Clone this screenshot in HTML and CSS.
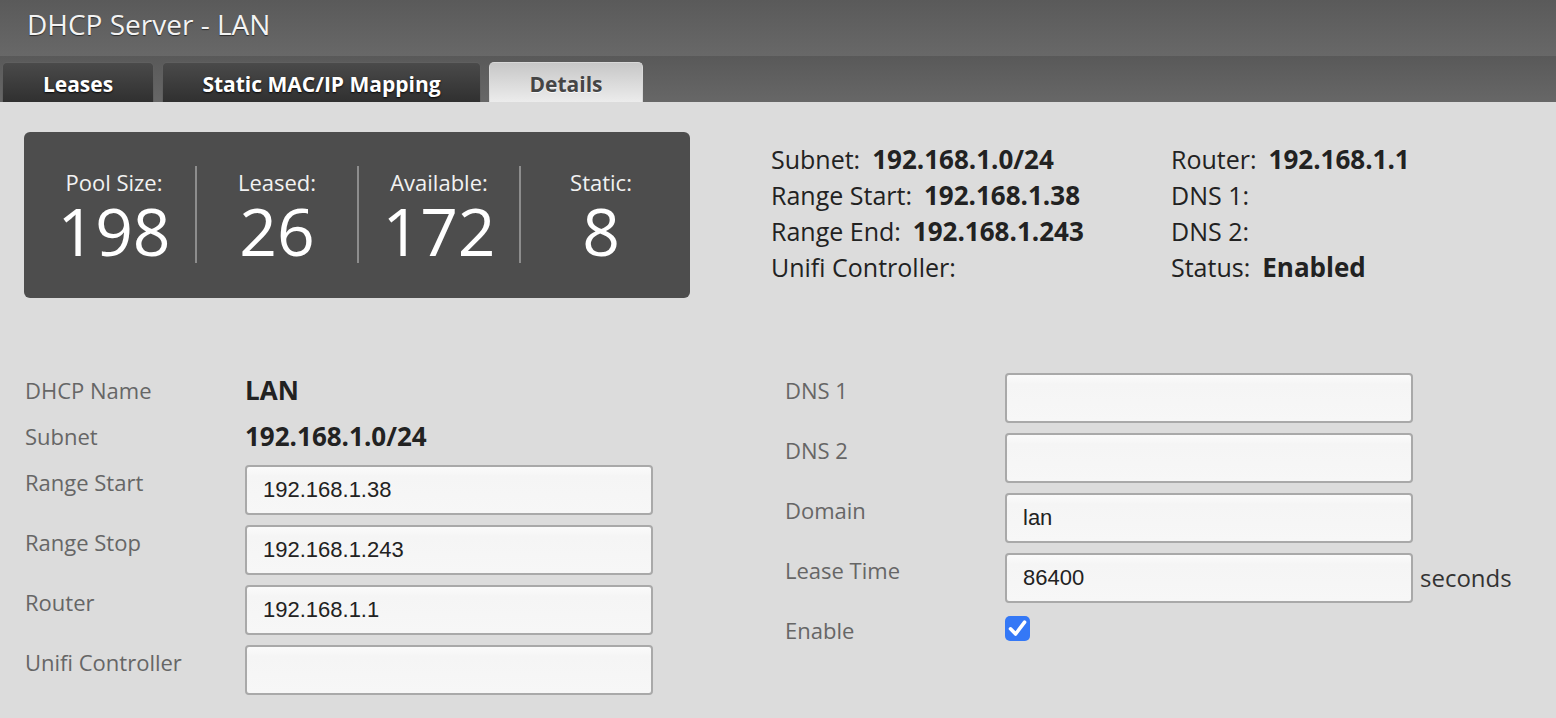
FILE: index.html
```html
<!DOCTYPE html>
<html lang="en">
<head>
<meta charset="utf-8">
<title>DHCP Server - LAN</title>
<link rel="stylesheet" href="styles.css">
</head>
<body>
<header class="titlebar">
  <h1 class="title">DHCP Server - LAN</h1>
</header>
<nav class="tabs">
  <a class="tab tab-leases">Leases</a>
  <a class="tab tab-static">Static MAC/IP Mapping</a>
  <a class="tab tab-details active">Details</a>
</nav>
<main class="content">
  <section class="summary">
    <div class="stats">
      <div class="stat">
        <div class="stat-label">Pool Size:</div>
        <div class="stat-num">198</div>
      </div>
      <div class="stat">
        <div class="stat-label">Leased:</div>
        <div class="stat-num">26</div>
      </div>
      <div class="stat">
        <div class="stat-label">Available:</div>
        <div class="stat-num">172</div>
      </div>
      <div class="stat">
        <div class="stat-label">Static:</div>
        <div class="stat-num">8</div>
      </div>
    </div>
    <div class="info">
      <div class="info-item"><span class="info-k">Subnet:</span><span class="info-v">192.168.1.0/24</span></div>
      <div class="info-item"><span class="info-k">Router:</span><span class="info-v">192.168.1.1</span></div>
      <div class="info-item"><span class="info-k">Range Start:</span><span class="info-v">192.168.1.38</span></div>
      <div class="info-item"><span class="info-k">DNS 1:</span><span class="info-v"></span></div>
      <div class="info-item"><span class="info-k">Range End:</span><span class="info-v">192.168.1.243</span></div>
      <div class="info-item"><span class="info-k">DNS 2:</span><span class="info-v"></span></div>
      <div class="info-item"><span class="info-k">Unifi Controller:</span><span class="info-v"></span></div>
      <div class="info-item"><span class="info-k">Status:</span><span class="info-v">Enabled</span></div>
    </div>
  </section>

  <section class="form">
    <div class="form-col">
      <div class="row row-text"><label class="lbl">DHCP Name</label><span class="val">LAN</span></div>
      <div class="row row-text"><label class="lbl">Subnet</label><span class="val">192.168.1.0/24</span></div>
      <div class="row row-input"><label class="lbl">Range Start</label><input class="field" type="text" value="192.168.1.38"></div>
      <div class="row row-input"><label class="lbl">Range Stop</label><input class="field" type="text" value="192.168.1.243"></div>
      <div class="row row-input"><label class="lbl">Router</label><input class="field" type="text" value="192.168.1.1"></div>
      <div class="row row-input"><label class="lbl">Unifi Controller</label><input class="field" type="text" value=""></div>
    </div>
    <div class="form-col">
      <div class="row row-input"><label class="lbl">DNS 1</label><input class="field" type="text" value=""></div>
      <div class="row row-input"><label class="lbl">DNS 2</label><input class="field" type="text" value=""></div>
      <div class="row row-input"><label class="lbl">Domain</label><input class="field" type="text" value="lan"></div>
      <div class="row row-input"><label class="lbl">Lease Time</label><input class="field" type="text" value="86400"><span class="unit">seconds</span></div>
      <div class="row row-check"><label class="lbl">Enable</label>
        <span class="checkbox" role="checkbox" aria-checked="true">
          <svg viewBox="0 0 25 25" width="25" height="25"><path d="M5.5 12.8 L10.6 18 L19.6 6.2" fill="none" stroke="#fff" stroke-width="3.6" stroke-linecap="round" stroke-linejoin="round"/></svg>
        </span>
      </div>
    </div>
  </section>
</main>
</body>
</html>
```
FILE: styles.css
```css
* { box-sizing: border-box; }

html, body {
  margin: 0;
  padding: 0;
}

body {
  background: #dcdcdc;
  font-family: "Open Sans", "Noto Sans", "Liberation Sans", sans-serif;
  color: #222;
  min-height: 100vh;
}

.titlebar {
  height: 56px;
  background: linear-gradient(#5a5a5a, #686868);
  padding-left: 27px;
}

.title {
  margin: 0;
  font-size: 28px;
  font-weight: 400;
  line-height: 48px;
  color: #f3f3f3;
  text-shadow: 0 1px 1px rgba(0, 0, 0, 0.55);
}

.tabs {
  height: 46px;
  background: linear-gradient(#595959, #676767);
  display: flex;
  align-items: flex-end;
  gap: 8px;
  padding-left: 2px;
}

.tab {
  height: 40px;
  line-height: 42px;
  text-align: center;
  font-size: 21px;
  font-weight: 700;
  color: #fff;
  text-shadow: 0 1px 2px rgba(0, 0, 0, 0.9);
  border-radius: 5px 5px 0 0;
  border: 1px solid #5f5f5f;
  border-bottom: none;
  background: linear-gradient(#4a4a4a, #303030);
}

.tab-leases { width: 152px; }
.tab-static { width: 319px; }
.tab-details { width: 154px; }

.tab.active {
  color: #454545;
  text-shadow: 0 1px 0 rgba(255, 255, 255, 0.8);
  border-color: #d8d8d8;
  background: linear-gradient(#c7c7c7, #ececec);
}

.content {
  padding: 30px 0 24px 24px;
}

.summary {
  display: flex;
  align-items: flex-start;
}

.stats {
  width: 666px;
  height: 166px;
  background: #4d4d4d;
  border-radius: 6px;
  padding: 34px 9px 0;
  display: flex;
  align-items: flex-start;
}

.stat {
  width: 162px;
  text-align: center;
  color: #fff;
}

.stat + .stat {
  border-left: 2px solid #8d8d8d;
}

.stat-label {
  font-size: 22px;
  line-height: 32px;
  color: #f2f2f2;
}

.stat-num {
  font-size: 66px;
  font-weight: 400;
  line-height: 65px;
}

.info {
  margin-left: 81px;
  padding-top: 9px;
  display: grid;
  grid-template-columns: 400px auto;
  font-size: 25px;
  line-height: 36px;
  color: #222;
}

.info-item {
  white-space: nowrap;
}

.info-v {
  font-size: 26px;
  font-weight: 700;
  margin-left: 12px;
}

.form {
  margin-top: 75px;
  padding-left: 1px;
  display: grid;
  grid-template-columns: 760px 760px;
}

.row {
  display: flex;
  align-items: flex-start;
}

.row-text { height: 46px; }
.row-input { height: 60px; }
.row-check { height: 46px; }

.lbl {
  width: 220px;
  flex: none;
  font-size: 22px;
  line-height: 34px;
  color: #666;
}

.val {
  font-size: 26px;
  font-weight: 700;
  line-height: 34px;
  color: #222;
}

.field {
  width: 408px;
  height: 50px;
  margin: 0;
  padding: 0 16px;
  border: 2px solid #a9a9a9;
  border-radius: 4px;
  background: linear-gradient(#fbfbfb, #f5f5f5 20%, #f7f7f7);
  font-family: "Liberation Sans", Arial, sans-serif;
  font-size: 22px;
  color: #222;
  outline: none;
}

.unit {
  margin-left: 7px;
  font-size: 24px;
  line-height: 50px;
  color: #333;
}

.checkbox {
  display: block;
  width: 25px;
  height: 25px;
  margin-top: 3px;
  border-radius: 5px;
  background: #3478f6;
}

.checkbox svg {
  display: block;
}
```
